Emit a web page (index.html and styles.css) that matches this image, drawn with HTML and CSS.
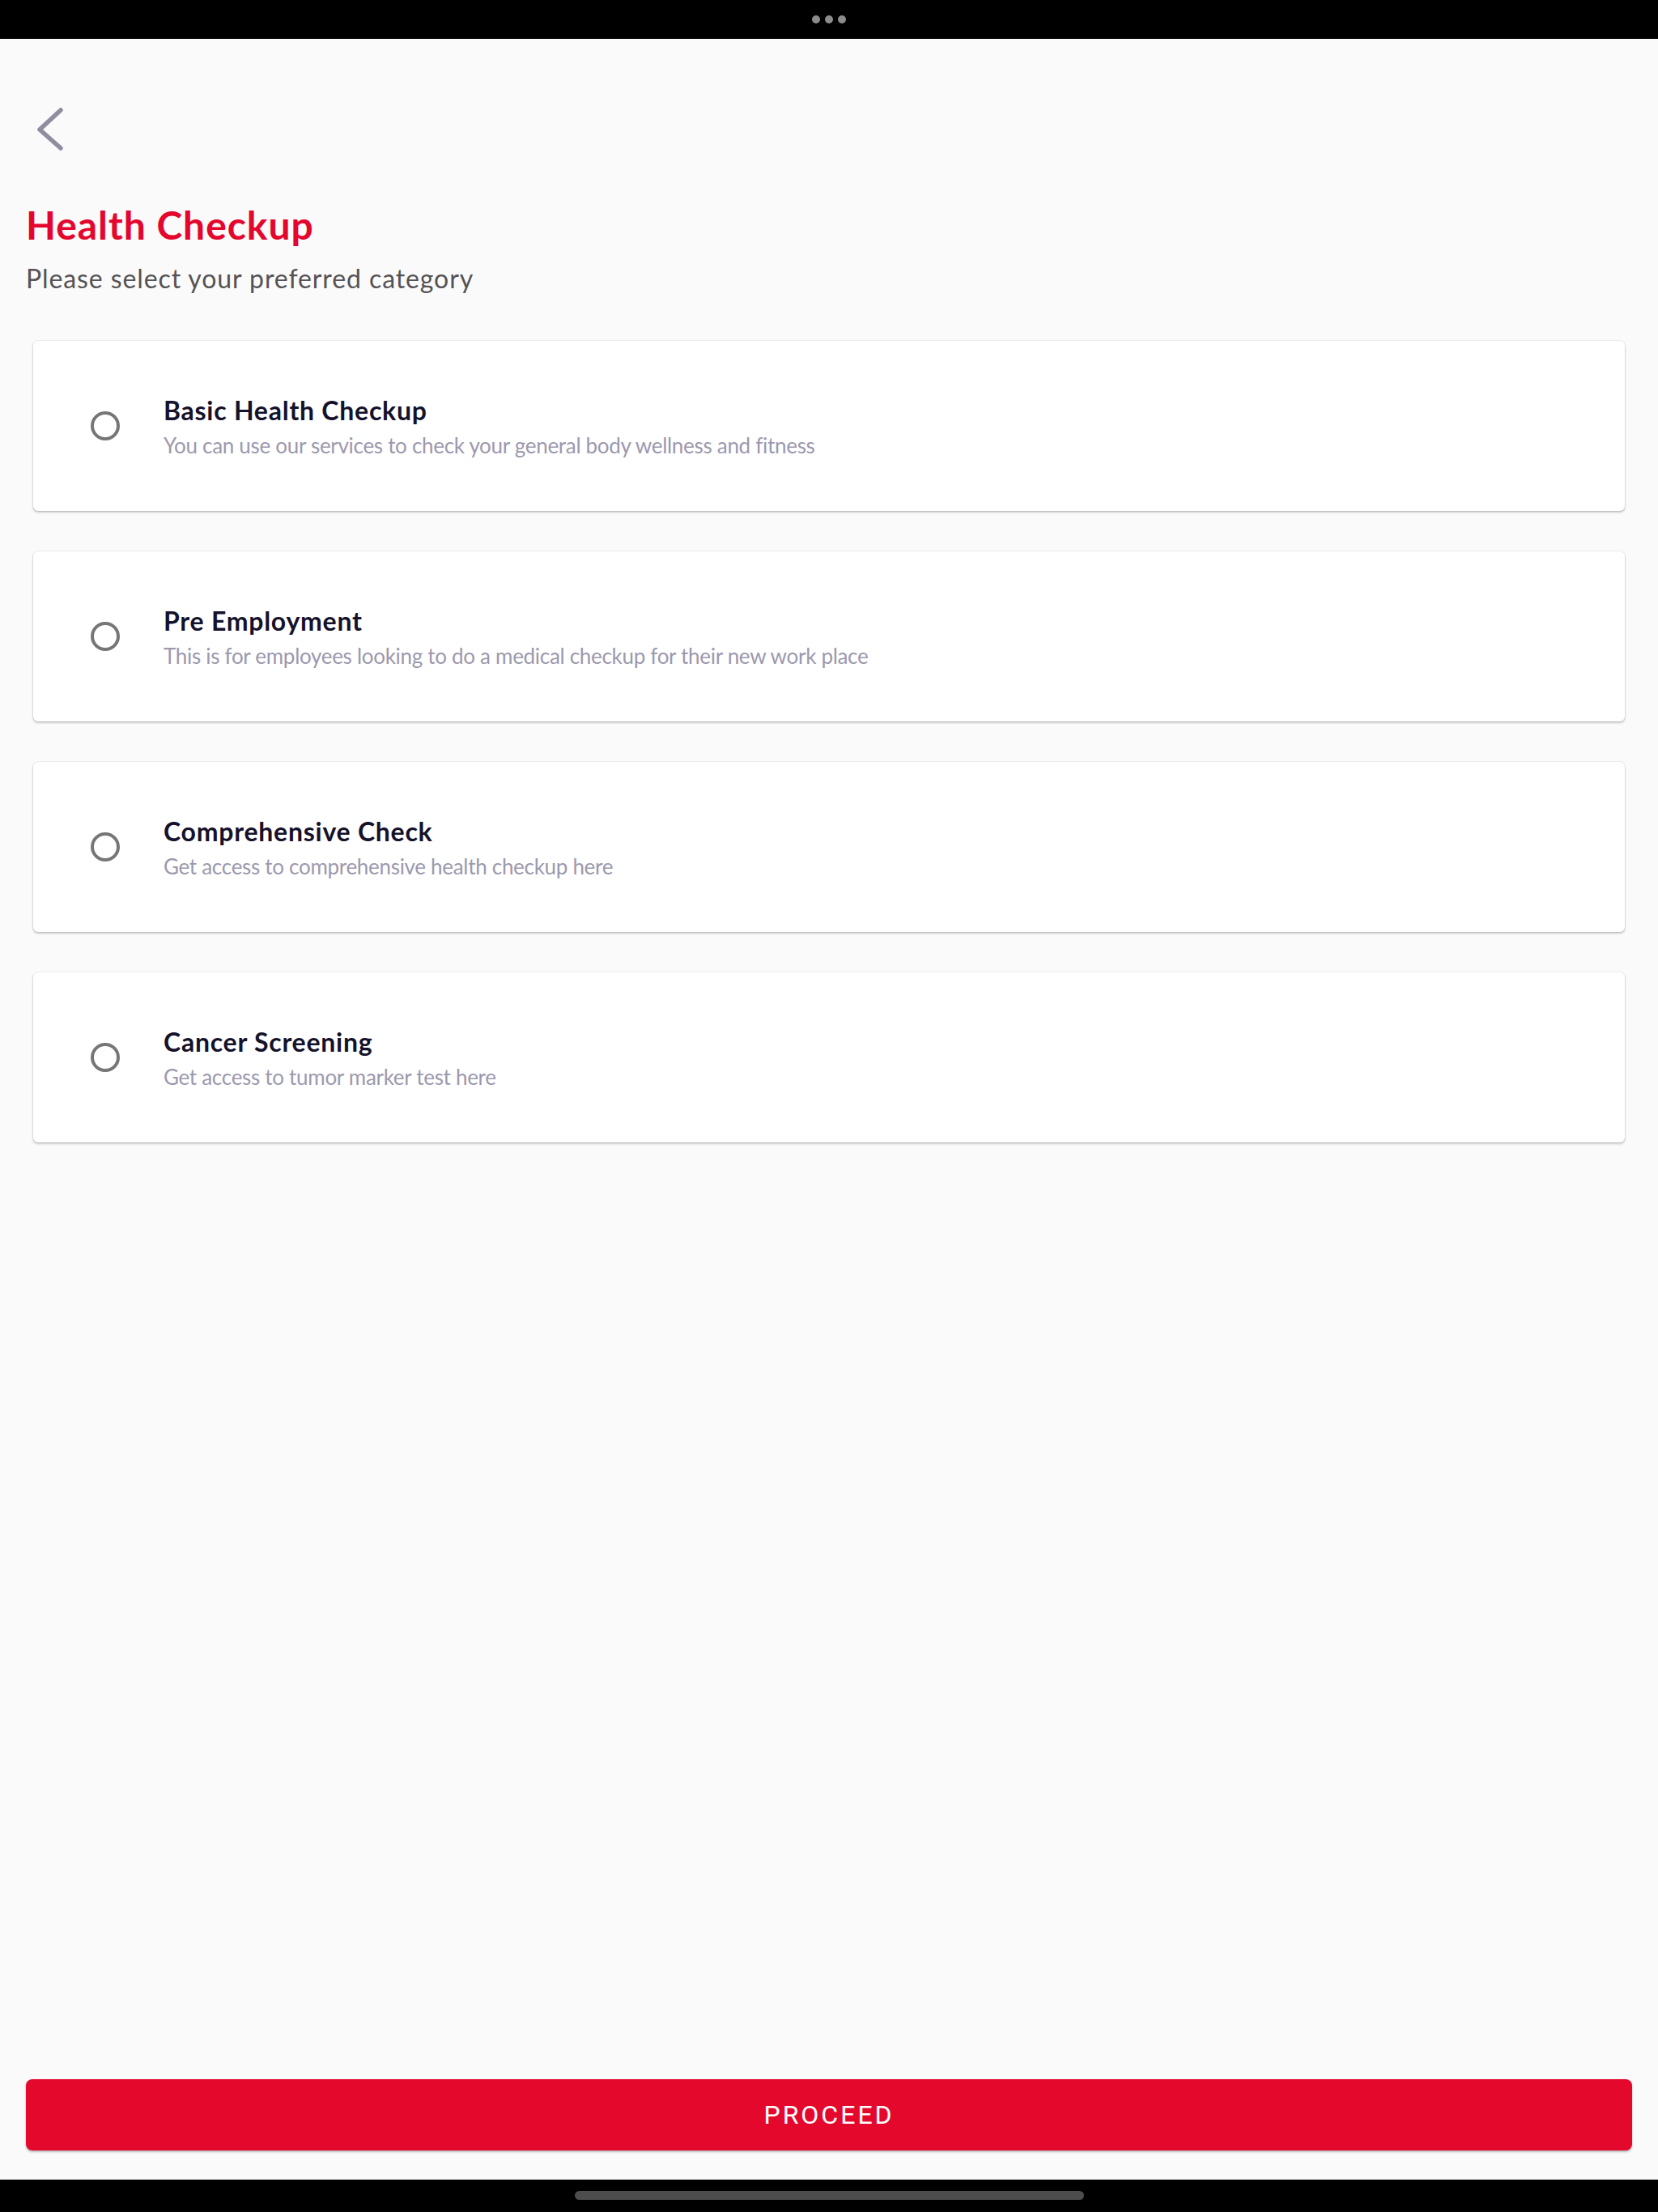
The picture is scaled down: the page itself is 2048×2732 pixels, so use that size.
FILE: index.html
```html
<!DOCTYPE html>
<html lang="en">
<head>
<meta charset="utf-8">
<title>Health Checkup</title>
<link rel="stylesheet" href="styles.css">
</head>
<body>
<div class="screen">
  <div class="status-bar">
    <span class="dot"></span><span class="dot"></span><span class="dot"></span>
  </div>
  <main class="main">
    <div class="header">
      <svg class="back" width="48" height="56" viewBox="0 0 48 56" aria-label="Back">
        <path d="M39 4 L13 28 L39 51" fill="none" stroke="#8f8d9f" stroke-width="5.5" stroke-linecap="round" stroke-linejoin="round"/>
      </svg>
      <h1 class="title">Health Checkup</h1>
      <p class="subtitle">Please select your preferred category</p>
    </div>
    <div class="options">
      <div class="card">
        <span class="radio"></span>
        <div class="card-text">
          <div class="card-title">Basic Health Checkup</div>
          <div class="card-desc">You can use our services to check your general body wellness and fitness</div>
        </div>
      </div>
      <div class="card">
        <span class="radio"></span>
        <div class="card-text">
          <div class="card-title">Pre Employment</div>
          <div class="card-desc">This is for employees looking to do a medical checkup for their new work place</div>
        </div>
      </div>
      <div class="card">
        <span class="radio"></span>
        <div class="card-text">
          <div class="card-title">Comprehensive Check</div>
          <div class="card-desc">Get access to comprehensive health checkup here</div>
        </div>
      </div>
      <div class="card">
        <span class="radio"></span>
        <div class="card-text">
          <div class="card-title">Cancer Screening</div>
          <div class="card-desc">Get access to tumor marker test here</div>
        </div>
      </div>
    </div>
    <div class="footer">
      <button class="proceed" type="button">PROCEED</button>
    </div>
  </main>
  <div class="nav-bar"><span class="home-indicator"></span></div>
</div>
</body>
</html>
```
FILE: styles.css
```css
* {
  box-sizing: border-box;
}

html, body {
  margin: 0;
  padding: 0;
}

body {
  background: #fafafa;
  font-family: "Lato", "Noto Sans", sans-serif;
}

.screen {
  display: flex;
  flex-direction: column;
  min-height: 2732px;
}

.status-bar {
  height: 48px;
  background: #000;
  display: flex;
  justify-content: center;
  align-items: center;
  gap: 6px;
}

.dot {
  width: 10px;
  height: 10px;
  border-radius: 50%;
  background: #8c8c8c;
}

.main {
  flex: 1;
  display: flex;
  flex-direction: column;
  padding: 0 32px;
}

.header {
  display: flex;
  flex-direction: column;
  align-items: flex-start;
}

.back {
  display: block;
  margin-top: 84px;
  margin-left: 4px;
}

.title {
  margin: 60px 0 0 0;
  font-size: 48px;
  line-height: 60px;
  font-weight: 700;
  color: #e4062d;
  letter-spacing: 0.95px;
}

.subtitle {
  margin: 16px 0 0 0;
  font-size: 32px;
  line-height: 40px;
  font-weight: 400;
  color: #555355;
  letter-spacing: 0.9px;
}

.options {
  display: flex;
  flex-direction: column;
  gap: 50px;
  margin: 57px 9px 0 9px;
}

.card {
  height: 210px;
  background: #fff;
  border-radius: 6px;
  box-shadow: 0 0 0 1px rgba(0, 0, 0, 0.05), 0 2px 3px rgba(0, 0, 0, 0.18), 0 1px 2px rgba(0, 0, 0, 0.06);
  display: flex;
  align-items: center;
  padding-left: 71px;
}

.radio {
  flex: none;
  width: 36px;
  height: 36px;
  border: 4px solid #767676;
  border-radius: 50%;
}

.card-text {
  margin-left: 54px;
  display: flex;
  flex-direction: column;
  gap: 7px;
}

.card-title {
  font-size: 32px;
  line-height: 40px;
  font-weight: 700;
  color: #15122b;
  letter-spacing: 0.75px;
}

.card-desc {
  font-size: 26px;
  line-height: 32px;
  font-weight: 400;
  color: #9c99ae;
  letter-spacing: -0.3px;
}

.footer {
  margin-top: auto;
  padding-bottom: 36px;
}

.proceed {
  display: block;
  width: 100%;
  height: 88px;
  border: none;
  border-radius: 8px;
  background: #e5082d;
  color: #fff;
  font-family: "Roboto", "Liberation Sans", sans-serif;
  font-size: 32px;
  font-weight: 400;
  letter-spacing: 3px;
  box-shadow: 0 2px 3px rgba(0, 0, 0, 0.22), 0 1px 2px rgba(0, 0, 0, 0.1);
  padding: 0;
}

.nav-bar {
  height: 40px;
  background: #000;
  display: flex;
  justify-content: center;
  padding-top: 14px;
}

.home-indicator {
  width: 629px;
  height: 11px;
  border-radius: 6px;
  background: #4d4d4d;
}
```
